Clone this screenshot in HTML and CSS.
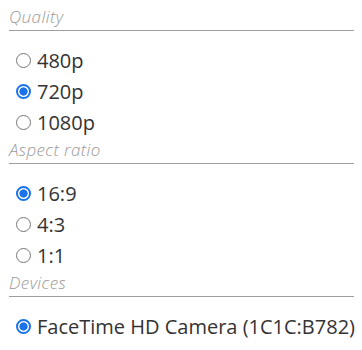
FILE: index.html
```html
<!DOCTYPE html>
<html>
<head>
<meta charset="utf-8">
<link rel="stylesheet" href="styles.css">
</head>
<body>
<div class="panel">
  <section class="group">
    <div class="legend">Quality</div>
    <div class="options">
      <label class="opt"><span class="radio"></span><span class="lbl">480p</span></label>
      <label class="opt"><span class="radio on"></span><span class="lbl">720p</span></label>
      <label class="opt"><span class="radio"></span><span class="lbl">1080p</span></label>
    </div>
  </section>
  <section class="group">
    <div class="legend">Aspect ratio</div>
    <div class="options">
      <label class="opt"><span class="radio on"></span><span class="lbl">16:9</span></label>
      <label class="opt"><span class="radio"></span><span class="lbl">4:3</span></label>
      <label class="opt"><span class="radio"></span><span class="lbl">1:1</span></label>
    </div>
  </section>
  <section class="group">
    <div class="legend">Devices</div>
    <div class="options">
      <label class="opt"><span class="radio on"></span><span class="lbl">FaceTime HD Camera (1C1C:B782)</span></label>
    </div>
  </section>
</div>
</body>
</html>
```
FILE: styles.css
```css
html, body {
  margin: 0;
  padding: 0;
  background: #ffffff;
}
.panel {
  padding: 5px 8px 0 9px;
  font-family: "Open Sans", "Liberation Sans", sans-serif;
  color: #333333;
}
.group {
  display: flex;
  flex-direction: column;
}
.legend {
  box-sizing: border-box;
  height: 26px;
  padding-top: 2px;
  font-size: 17px;
  letter-spacing: 0.4px;
  line-height: 20px;
  font-style: italic;
  font-weight: 300;
  color: #9a9a9a;
  border-bottom: 1px solid #9e9e9e;
}
.options {
  display: flex;
  flex-direction: column;
  padding: 14px 0 0 7px;
}
.opt {
  display: flex;
  align-items: center;
  height: 31px;
  gap: 6px;
  white-space: nowrap;
}
.radio {
  width: 15px;
  height: 15px;
  box-sizing: border-box;
  border: 1px solid #767676;
  border-radius: 50%;
  background: #fff;
  flex: none;
}
.radio.on {
  border: 2px solid #1a73e8;
  background: radial-gradient(circle, #1a73e8 0 3.8px, #fff 4.4px);
}
.lbl {
  font-size: 20px;
  line-height: 31px;
}
```
